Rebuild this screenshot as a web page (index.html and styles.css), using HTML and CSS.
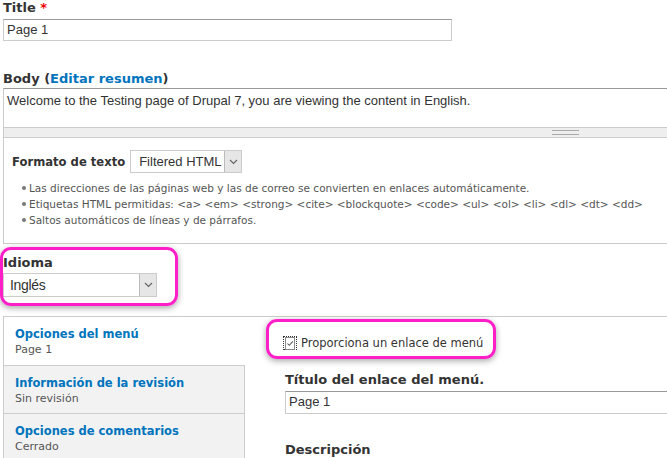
FILE: index.html
```html
<!DOCTYPE html>
<html>
<head>
	<title>Editar Page 1</title>
	<link rel="stylesheet" href="styles.css">
</head>
<body>
	<div class="page">
		<div class="form-item">
			<label class="form-label">Title <span class="required">*</span></label>
			<div class="text-input title-input">Page 1</div>
		</div>

		<div class="form-item body-item">
			<label class="form-label">Body (<a href="#" class="link">Editar resumen</a>)</label>
			<div class="textarea">Welcome to the Testing page of Drupal 7, you are viewing the content in English.</div>
			<div class="grippie"><span class="grip"></span></div>
			<div class="filter-wrapper">
				<div class="filter-row">
					<label class="form-label">Formato de texto</label>
					<div class="select filter-select">
						<span class="select-value">Filtered HTML</span>
						<span class="select-arrow"><svg width="9" height="6" viewBox="0 0 9 6"><path d="M1 1l3.5 3.5L8 1" fill="none" stroke="#666" stroke-width="1.2"/></svg></span>
					</div>
				</div>
				<ul class="tips">
					<li>Las direcciones de las páginas web y las de correo se convierten en enlaces automáticamente.</li>
					<li>Etiquetas HTML permitidas: &lt;a&gt; &lt;em&gt; &lt;strong&gt; &lt;cite&gt; &lt;blockquote&gt; &lt;code&gt; &lt;ul&gt; &lt;ol&gt; &lt;li&gt; &lt;dl&gt; &lt;dt&gt; &lt;dd&gt;</li>
					<li>Saltos automáticos de líneas y de párrafos.</li>
				</ul>
			</div>
		</div>

		<div class="form-item lang-item">
			<label class="form-label">Idioma</label>
			<div class="select lang-select">
				<span class="select-value">Inglés</span>
				<span class="select-arrow"><svg width="9" height="6" viewBox="0 0 9 6"><path d="M1 1l3.5 3.5L8 1" fill="none" stroke="#666" stroke-width="1.2"/></svg></span>
			</div>
			<div class="highlight lang-highlight"></div>
		</div>

		<div class="vtabs">
			<ul class="vtabs-list">
				<li class="vtab selected">
					<a href="#" class="vtab-title">Opciones del menú</a>
					<span class="vtab-summary">Page 1</span>
				</li>
				<li class="vtab">
					<a href="#" class="vtab-title">Información de la revisión</a>
					<span class="vtab-summary">Sin revisión</span>
				</li>
				<li class="vtab">
					<a href="#" class="vtab-title">Opciones de comentarios</a>
					<span class="vtab-summary">Cerrado</span>
				</li>
			</ul>
			<div class="vtabs-pane">
				<div class="checkbox-item">
					<span class="checkbox"><svg width="11" height="11" viewBox="0 0 11 11"><path d="M2 5.5l2.5 2.5L9.5 2.5" fill="none" stroke="#555" stroke-width="1.4"/></svg></span>
					<label class="option">Proporciona un enlace de menú</label>
					<div class="highlight check-highlight"></div>
				</div>
				<div class="form-item menu-title-item">
					<label class="form-label">Título del enlace del menú.</label>
					<div class="text-input menu-input">Page 1</div>
				</div>
				<div class="form-item desc-item">
					<label class="form-label">Descripción</label>
				</div>
			</div>
		</div>
	</div>
</body>
</html>
```

FILE: styles.css
```css
html, body {
	margin: 0;
	overflow: hidden;
	background-color: #fff;
}

body {
	font-family: "Liberation Sans", Arial, sans-serif;
	font-size: 13px;
	color: #333;
}

.page {
	width: 1120px;
	padding: 0 0 0 3px;
}

.form-item {
	position: relative;
}

.form-label {
	display: block;
	font-family: "DejaVu Sans", Verdana, sans-serif;
	font-weight: bold;
	font-size: 13px;
	line-height: 16px;
	color: #333;
}

.required {
	color: #e00;
}

.link {
	color: #0074bd;
	text-decoration: none;
}

.text-input {
	box-sizing: border-box;
	height: 22px;
	padding: 2px 3px;
	line-height: 16px;
	border: 1px solid #ccc;
	border-top-color: #999;
	color: #333;
}

.title-input {
	width: 449px;
	margin-top: 3px;
}

.body-item {
	margin-top: 30px;
}

.body-item > .form-label {
	margin-bottom: 1px;
}

.textarea {
	box-sizing: border-box;
	height: 39px;
	padding: 4px 3px;
	line-height: 16px;
	border: 1px solid #ccc;
	border-top-color: #999;
	border-bottom: none;
}

.grippie {
	height: 9px;
	background-color: #eee;
	border: 1px solid #ccc;
	display: flex;
	justify-content: center;
	align-items: center;
}

.grip {
	width: 27px;
	height: 3px;
	border-top: 1px solid #aaa;
	border-bottom: 1px solid #aaa;
	position: relative;
	left: 2px;
}

.filter-wrapper {
	border: 1px solid #ccc;
	border-top: none;
	height: 105px;
	padding: 0 8px;
}

.filter-row {
	display: flex;
	align-items: center;
	gap: 5px;
	padding-top: 12px;
}

.filter-row .form-label {
	font-size: 11.6px;
}

.select {
	display: flex;
	box-sizing: border-box;
	border: 1px solid #ccc;
	background-color: #fff;
}

.select-value {
	flex: 1;
	padding: 0 4px;
	line-height: 20px;
	white-space: nowrap;
	overflow: hidden;
}

.select-arrow {
	width: 16px;
	background-color: #e6e6e6;
	border-left: 1px solid #bbb;
	display: flex;
	align-items: center;
	justify-content: center;
}

.filter-select {
	width: 112px;
	height: 23px;
}

.filter-select .select-value {
	padding: 0 0 0 8px;
	line-height: 21px;
}

.tips {
	margin: 7px 0 0 0;
	padding: 0 0 0 17px;
	font-family: "DejaVu Sans", Verdana, sans-serif;
	font-size: 10.5px;
	line-height: 16px;
	color: #555;
	list-style: none;
}

.tips li {
	position: relative;
}

.tips li::before {
	content: "";
	position: absolute;
	left: -7px;
	top: 6px;
	width: 4px;
	height: 4px;
	border-radius: 50%;
	background-color: #777;
}

.lang-item {
	margin-top: 11px;
}

.lang-item .form-label {
	font-size: 13px;
	margin-bottom: 2px;
}

.lang-select {
	width: 154px;
	height: 24px;
	font-size: 14px;
}

.lang-select .select-value {
	line-height: 22px;
	padding: 0 6px;
	letter-spacing: -0.3px;
}

.highlight {
	position: absolute;
	border: 3px solid #ff1fc8;
	border-radius: 11px;
	box-shadow: 0 2px 6px rgba(0, 0, 0, 0.35);
	pointer-events: none;
}

.lang-highlight {
	left: -3px;
	top: -8px;
	width: 172px;
	height: 53px;
}

.vtabs {
	display: flex;
	margin-top: 19px;
	border-top: 1px solid #ccc;
}

.vtabs-list {
	width: 240px;
	margin: 0;
	padding: 0;
	list-style: none;
	border-left: 1px solid #ccc;
	border-right: 1px solid #ccc;
}

.vtab {
	height: 48px;
	padding: 9px 0 0 11px;
	box-sizing: border-box;
	background-color: #f2f2f2;
	border-top: 1px solid #ccc;
}

.vtab:first-child {
	border-top: none;
	height: 48px;
}

.vtab.selected {
	background-color: #fff;
	margin-right: -8px;
	position: relative;
}

.vtab-title {
	display: block;
	font-family: "DejaVu Sans", Verdana, sans-serif;
	font-weight: bold;
	font-size: 11.5px;
	line-height: 16px;
	color: #0074bd;
	text-decoration: none;
}

.vtab-summary {
	display: block;
	font-family: "DejaVu Sans", Verdana, sans-serif;
	font-size: 11px;
	line-height: 16px;
	color: #555;
}

.vtabs-pane {
	flex: 1;
	padding: 14px 0 0 40px;
}

.checkbox-item {
	position: relative;
	display: flex;
	align-items: center;
	gap: 4px;
	height: 20px;
	padding-top: 2px;
	margin-left: -2px;
}

.checkbox {
	box-sizing: border-box;
	width: 14px;
	height: 14px;
	border: 1px dotted #333;
	padding: 1px;
	display: flex;
	align-items: center;
	justify-content: center;
}

.checkbox svg {
	border: 1px solid #888;
	background-color: #fff;
}

.option {
	font-family: "DejaVu Sans", Verdana, sans-serif;
	font-size: 11.5px;
	color: #333;
}

.check-highlight {
	left: -17px;
	top: -12px;
	width: 224px;
	height: 34px;
}

.menu-title-item {
	margin-top: 19px;
}

.menu-input {
	width: 800px;
	margin-top: 3px;
	height: 23px;
}

.desc-item {
	margin-top: 28px;
}
```
